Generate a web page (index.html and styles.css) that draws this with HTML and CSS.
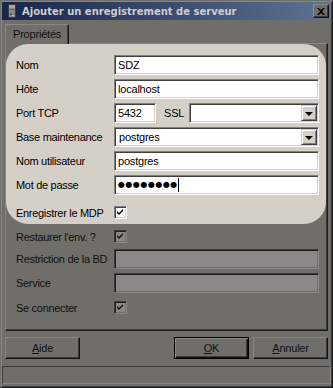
FILE: index.html
```html
<!DOCTYPE html>
<html lang="fr">
<head>
  <meta charset="UTF-8" />
  <title>Ajouter un enregistrement de serveur</title>
  <link rel="stylesheet" href="styles.css">
</head>
<body>

<div class="window">
  <!-- Barre de titre -->
  <div class="titlebar">
    <svg class="app-icon" width="8" height="14" viewBox="0 0 8 14">
      <rect x="0" y="0" width="8" height="14" fill="#3b3b3b"/>
      <rect x="1" y="1" width="6" height="12" fill="#8b8a8a"/>
      <rect x="1" y="1" width="6" height="3" fill="#a9a9a9"/>
      <rect x="2" y="5" width="4" height="1" fill="#5e5e5e"/>
      <rect x="2" y="9" width="2" height="2" fill="#2e6d68"/>
      <rect x="4" y="11" width="2" height="1" fill="#bdbdbd"/>
    </svg>
    <span class="title">Ajouter un enregistrement de serveur</span>
    <div class="close-btn">
      <svg width="8" height="7" viewBox="0 0 8 7">
        <path d="M0 0h2l2 2 2-2h2L5 3.5 8 7H6L4 5 2 7H0l3-3.5z" fill="#000"/>
      </svg>
    </div>
  </div>

  <!-- Onglets -->
  <div class="tabs">
    <div class="tab">Propriétés</div>
    <div class="tab-fill"></div>
  </div>

  <div class="panel">
    <div class="spotlight">
      <div class="row">
        <span class="label">Nom</span>
        <div class="field">SDZ</div>
      </div>
      <div class="row">
        <span class="label">Hôte</span>
        <div class="field">localhost</div>
      </div>
      <div class="row">
        <span class="label">Port TCP</span>
        <div class="field port">5432</div>
        <span class="ssl-label">SSL</span>
        <div class="field combo">
          <span class="combo-value"></span>
          <span class="drop-btn"></span>
        </div>
      </div>
      <div class="row">
        <span class="label">Base maintenance</span>
        <div class="field combo">
          <span class="combo-value">postgres</span>
          <span class="drop-btn"></span>
        </div>
      </div>
      <div class="row">
        <span class="label">Nom utilisateur</span>
        <div class="field">postgres</div>
      </div>
      <div class="row">
        <span class="label">Mot de passe</span>
        <div class="field"><span class="dots">●●●●●●●●</span><span class="caret"></span></div>
      </div>
      <div class="row check-row first-check">
        <span class="label">Enregistrer le MDP</span>
        <span class="check">
          <svg width="9" height="9" viewBox="0 0 9 9"><path d="M1 3l2 2 4-4v2L3 7 1 5z" fill="#000"/></svg>
        </span>
      </div>
    </div>

    <div class="rest">
      <div class="row check-row">
        <span class="label">Restaurer l'env. ?</span>
        <span class="check dim">
          <svg width="9" height="9" viewBox="0 0 9 9"><path d="M1 3l2 2 4-4v2L3 7 1 5z" fill="#111"/></svg>
        </span>
      </div>
      <div class="row gap-6">
        <span class="label">Restriction de la BD</span>
        <div class="field dim"></div>
      </div>
      <div class="row">
        <span class="label">Service</span>
        <div class="field dim"></div>
      </div>
      <div class="row check-row gap-8">
        <span class="label">Se connecter</span>
        <span class="check dim">
          <svg width="9" height="9" viewBox="0 0 9 9"><path d="M1 3l2 2 4-4v2L3 7 1 5z" fill="#111"/></svg>
        </span>
      </div>
    </div>
  </div>

  <!-- Boutons -->
  <div class="buttons">
    <div class="btn"><u>A</u>ide</div>
    <div class="spacer"></div>
    <div class="btn default"><u>O</u>K</div>
    <div class="btn"><u>A</u>nnuler</div>
  </div>

  <div class="statusbar"></div>
</div>

</body>
</html>
```

FILE: styles.css
```css
* { box-sizing: border-box; }
body {
  margin: 0;
  font-family: "Liberation Sans", Arial, sans-serif;
  font-size: 11px;
  letter-spacing: -0.2px;
  color: #000;
  background: #6f6e69;
}
.window {
  width: 333px;
  height: 388px;
  background: #6f6e69;
  border: 1px solid;
  border-color: #6f6e69 #1c1c1b #1c1c1b #6f6e69;
  box-shadow: inset 1px 1px #898883, inset -1px -1px #3c3b38;
  padding: 1px;
  display: flex;
  flex-direction: column;
}

/* barre de titre */
.titlebar {
  height: 18px;
  display: flex;
  align-items: center;
  background: linear-gradient(to right, #17264a, #5e7292);
  padding: 0 2px 0 6px;
}
.app-icon { margin-right: 6px; }
.title {
  flex: 1;
  color: #cdcdd0;
  font-family: "DejaVu Sans", sans-serif;
  font-weight: bold;
  font-size: 10px;
  letter-spacing: 0;
}
.close-btn {
  width: 16px;
  height: 14px;
  display: flex;
  align-items: center;
  justify-content: center;
  background: #6f6e69;
  border: 1px solid;
  border-color: #898883 #121212 #121212 #898883;
  box-shadow: inset -1px -1px #3c3b38;
}

/* onglets */
.tabs {
  display: flex;
  align-items: flex-end;
  height: 24px;
  padding: 0 3px;
}
.tab {
  width: 64px;
  height: 20px;
  padding-left: 7px;
  line-height: 19px;
  border-top: 1px solid #898883;
  border-left: 1px solid #898883;
  border-right: 1px solid #1c1c1b;
  box-shadow: inset -1px 0 #3c3b38;
  border-radius: 2px 2px 0 0;
  color: #111;
}
.tab-fill {
  flex: 1;
  border-bottom: 1px solid #898883;
  border-right: 1px solid #1c1c1b;
}

.panel {
  height: 287px;
  margin: 0 3px;
  border-left: 1px solid #898883;
  border-right: 1px solid #1c1c1b;
  border-bottom: 1px solid #1c1c1b;
  box-shadow: inset -1px -1px #3c3b38;
}
.spotlight {
  height: 180px;
  margin-right: 1px;
  background: #d4d0c8;
  border-radius: 22px;
  padding: 11px 7px 5px 10px;
}
.rest { padding: 0 8px 0 10px; }

.row {
  display: flex;
  align-items: center;
  height: 20px;
}
.row + .row { margin-top: 4px; }
.check-row { height: 13px; }
.first-check.row { margin-top: 11px; }
.rest .check-row:first-child { margin-top: 6px; }
.gap-6.row { margin-top: 6px; }
.gap-8.row { margin-top: 8px; }
.label {
  width: 98px;
  flex: none;
  white-space: nowrap;
  letter-spacing: -0.3px;
}
.rest .label { color: #111; }

.field {
  flex: 1;
  height: 20px;
  background: #fff;
  border: 1px solid;
  border-color: #808080 #fff #fff #808080;
  box-shadow: inset 1px 1px #404040, inset -1px -1px #d4d0c8;
  padding: 0 3px;
  line-height: 18px;
  display: flex;
  align-items: center;
  white-space: nowrap;
}
.field.port { flex: none; width: 42px; }
.ssl-label { width: 25px; margin-left: 8px; flex: none; }
.field.combo { padding: 1px 1px 1px 4px; }
.combo-value { flex: 1; }
.drop-btn {
  width: 16px;
  height: 16px;
  background: #d4d0c8;
  border: 1px solid;
  border-color: #d4d0c8 #404040 #404040 #d4d0c8;
  box-shadow: inset 1px 1px #fff, inset -1px -1px #808080;
  display: flex;
  align-items: center;
  justify-content: center;
}
.drop-btn::after {
  content: "";
  border-left: 4px solid transparent;
  border-right: 4px solid transparent;
  border-top: 4px solid #000;
  margin-top: 1px;
}
.dots {
  font-family: "DejaVu Sans", sans-serif;
  font-size: 8px;
  letter-spacing: 0.5px;
}
.caret {
  width: 1px;
  height: 14px;
  background: #000;
}
.field.dim {
  background: #8a8985;
  border-color: #3c3b38 #8a8985 #8a8985 #3c3b38;
  box-shadow: inset 1px 1px #1e1e1d, inset -1px -1px #6f6e69;
}

.check {
  width: 13px;
  height: 13px;
  flex: none;
  background: #fff;
  border: 1px solid;
  border-color: #808080 #fff #fff #808080;
  box-shadow: inset 1px 1px #404040, inset -1px -1px #d4d0c8;
  display: flex;
  align-items: center;
  justify-content: center;
}
.check.dim {
  background: #8a8985;
  border-color: #3c3b38 #8a8985 #8a8985 #3c3b38;
  box-shadow: inset 1px 1px #1e1e1d, inset -1px -1px #6f6e69;
}

/* boutons */
.buttons {
  display: flex;
  margin-top: 6px;
  padding: 0 3px;
  gap: 4px;
}
.spacer { flex: 1; }
.btn {
  width: 75px;
  height: 22px;
  background: #6f6e69;
  border: 1px solid;
  border-color: #898883 #121212 #121212 #898883;
  box-shadow: inset -1px -1px #3c3b38;
  display: flex;
  align-items: center;
  justify-content: center;
  color: #111;
}
.btn.default {
  border-color: #000;
  box-shadow: inset 1px 1px #898883, inset -1px -1px #121212, inset -2px -2px #3c3b38;
}
.statusbar {
  height: 18px;
  margin-top: 7px;
  border: 1px solid;
  border-color: #3c3b38 #898883 #898883 #3c3b38;
}
```
